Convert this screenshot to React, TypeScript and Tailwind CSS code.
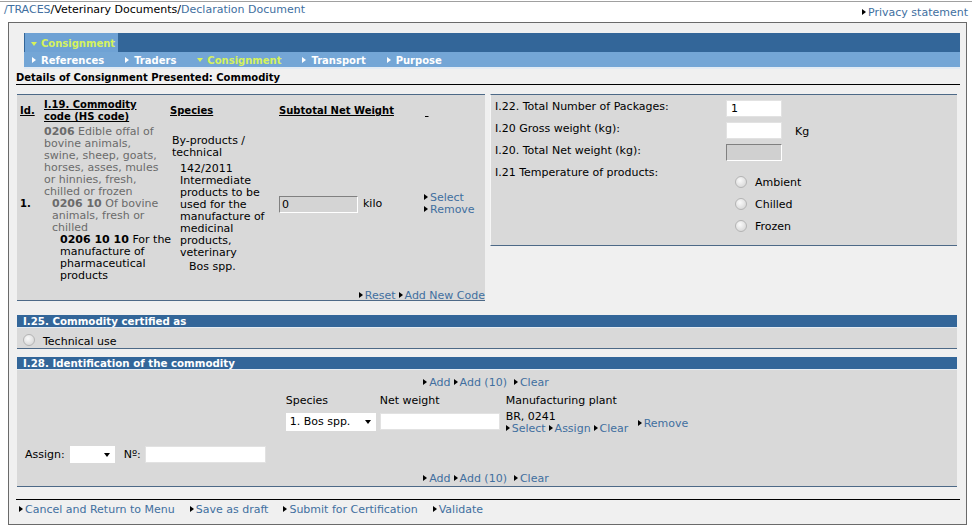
import React from "react";

const Tri = () => (
  <span className="inline-block w-0 h-0 border-y-[3.5px] border-y-transparent border-l-[4px] border-l-black mr-[2px] align-[1px]" />
);
const TriW = () => (
  <span className="inline-block w-0 h-0 border-y-[3.5px] border-y-transparent border-l-[4px] border-l-white mr-[5px] align-[1px]" />
);
const DownY = () => (
  <span className="inline-block w-0 h-0 border-x-[3.5px] border-x-transparent border-t-[4px] border-t-[#d6f25c] mr-[4px] align-[2px]" />
);
const DownB = () => (
  <span className="inline-block w-0 h-0 border-x-[3.5px] border-x-transparent border-t-[4px] border-t-black" />
);

const L = ({ children }: { children: React.ReactNode }) => (
  <span className="text-[#416f9f] whitespace-nowrap">
    <Tri />
    {children}
  </span>
);

const Radio = () => (
  <span className="inline-block w-[12px] h-[12px] rounded-full border border-[#b4b4b4] bg-[radial-gradient(circle_at_40%_35%,#fafafa,#d0d0d0)] shrink-0" />
);

const Bar = ({ children }: { children: React.ReactNode }) => (
  <div className="h-[12px] leading-[13px] bg-[#336699] text-white font-bold text-[10.25px] pl-[6px] border-b border-b-[#e4ebf2] box-content">
    {children}
  </div>
);

export default function App() {
  return (
    <div className="w-[972px] h-[526px] bg-white overflow-hidden font-['DejaVu_Sans',sans-serif] text-[11px] text-black">
      <div className="border-t border-[#a0a0a0] mt-[1px] h-[21px] flex justify-between leading-[13px]">
        <div className="pl-[4px] pt-[1px]">
          <span className="text-[#416f9f]">/TRACES</span>/Veterinary Documents/
          <span className="text-[#416f9f]">Declaration Document</span>
        </div>
        <div className="pr-[4px] pt-[4px]">
          <L>Privacy statement</L>
        </div>
      </div>

      <div className="ml-[8px] w-[959px] h-[503px] border border-[#6a6a6a] bg-[#f0f0f0] pl-[7px] pr-[6px] pt-[10px] flex flex-col">
        {/* nav */}
        <div className="ml-[8px]">
          <div className="h-[19px] bg-[#336699] flex">
            <div className="ml-[1px] w-[93px] bg-[#6fa2d4] flex items-center pt-[2px] pl-[6px] font-bold text-[10px] text-[#d6f25c] leading-[12px]">
              <DownY />
              Consignment
            </div>
          </div>
          <div className="h-[15px] bg-[#74a6d6] flex items-center pt-[2px] font-bold text-[10px] text-white pl-[8px] gap-[21px] leading-[12px]">
            <span className="whitespace-nowrap"><TriW />References</span>
            <span className="whitespace-nowrap"><TriW />Traders</span>
            <span className="whitespace-nowrap text-[#d6f25c]"><DownY />Consignment</span>
            <span className="whitespace-nowrap"><TriW />Transport</span>
            <span className="whitespace-nowrap"><TriW />Purpose</span>
          </div>
          <div className="h-[2px] bg-[#e2ebf4]" />
        </div>

        <div className="font-bold text-[10px] leading-[13px] pt-[2px] border-b border-black">
          Details of Consignment Presented: Commodity
        </div>

        {/* panels */}
        <div className="flex gap-[5px] ml-[1px] mr-[3px] mt-[9px] items-start">
          <div className="w-[468px] h-[207px] bg-[#d9d9d9] border-y border-[#4d6987] flex flex-col leading-[12px]">
            <div className="grid grid-cols-[24px_126px_109px_145px_61px] gap-y-[3px] pl-[3px] pt-[4px]">
              <div className="self-center font-bold text-[10px] underline">Id.</div>
              <div className="font-bold text-[10px] underline leading-[12px]">
                I.19. Commodity
                <br />
                code (HS code)
              </div>
              <div className="self-center font-bold text-[10px] underline">Species</div>
              <div className="self-center font-bold text-[10px] underline">Subtotal Net Weight</div>
              <div className="self-center pt-[2px] pl-[1px] underline">&nbsp;</div>

              <div className="self-center font-bold text-[10px]">1.</div>
              <div className="text-[#6b6b6b] whitespace-nowrap">
                <b>0206</b> Edible offal of
                <br />
                bovine animals,
                <br />
                swine, sheep, goats,
                <br />
                horses, asses, mules
                <br />
                or hinnies, fresh,
                <br />
                chilled or frozen
                <div className="pl-[8px]">
                  <b>0206 10</b> Of bovine
                  <br />
                  animals, fresh or
                  <br />
                  chilled
                  <div className="pl-[8px] text-black">
                    <b>0206 10 10</b> For the
                    <br />
                    manufacture of
                    <br />
                    pharmaceutical
                    <br />
                    products
                  </div>
                </div>
              </div>
              <div className="self-center whitespace-nowrap pl-[2px]">
                By-products /
                <br />
                technical
                <div className="pl-[8px] mt-[4px]">
                  142/2011
                  <br />
                  Intermediate
                  <br />
                  products to be
                  <br />
                  used for the
                  <br />
                  manufacture of
                  <br />
                  medicinal
                  <br />
                  products,
                  <br />
                  veterinary
                  <div className="pl-[9px] mt-[2px]">Bos spp.</div>
                </div>
              </div>
              <div className="self-center flex items-center">
                <div className="w-[79px] h-[17px] bg-[#d4d4d4] border-t border-l border-[#808080] border-b border-r border-b-white border-r-white pl-[2px] leading-[15px]">
                  0
                </div>
                <span className="ml-[5px]">kilo</span>
              </div>
              <div className="self-center flex flex-col leading-[12px]">
                <L>Select</L>
                <L>Remove</L>
              </div>
            </div>
            <div className="mt-auto flex justify-end gap-[3px] leading-[12px] -mb-[2px]">
              <L>Reset</L>
              <L>Add New Code</L>
            </div>
          </div>

          <div className="w-[467px] h-[152px] bg-[#d9d9d9] border-y border-[#4d6987] border-l border-l-[#f6f6f6] pl-[4px] pt-[5px] leading-[13px]">
            <div className="grid grid-cols-[231px_auto] gap-y-[5px]">
              <div>I.22. Total Number of Packages:</div>
              <div className="w-[56px] h-[17px] bg-white border border-[#e2e2e2] pl-[4px] leading-[15px]">1</div>
              <div>I.20 Gross weight (kg):</div>
              <div className="flex items-center">
                <div className="w-[56px] h-[17px] bg-white border border-[#e2e2e2]" />
                <span className="ml-[13px] mt-[1px]">Kg</span>
              </div>
              <div>I.20. Total Net weight (kg):</div>
              <div className="w-[56px] h-[17px] bg-[#d0d0d0] border-t border-l border-[#808080] border-b border-r border-b-white border-r-white" />
              <div>I.21 Temperature of products:</div>
              <div className="pl-[9px] pt-[9px] flex flex-col gap-y-[9px]">
                <div className="flex items-center gap-[8px] h-[13px]">
                  <Radio />
                  <span className="mt-[1px]">Ambient</span>
                </div>
                <div className="flex items-center gap-[8px] h-[13px]">
                  <Radio />
                  <span className="mt-[1px]">Chilled</span>
                </div>
                <div className="flex items-center gap-[8px] h-[13px]">
                  <Radio />
                  <span className="mt-[1px]">Frozen</span>
                </div>
              </div>
            </div>
          </div>
        </div>

        {/* I.25 */}
        <div className="ml-[1px] mr-[3px] mt-[14px]">
          <Bar>I.25. Commodity certified as</Bar>
          <div className="h-[21px] bg-[#d9d9d9] border-b border-[#4d6987] flex items-start pt-[6px] pl-[6px] gap-[8px] leading-[12px]">
            <Radio />
            <span className="mt-[2px]">Technical use</span>
          </div>
        </div>

        {/* I.28 */}
        <div className="ml-[1px] mr-[3px] mt-[8px]">
          <Bar>I.28. Identification of the commodity</Bar>
          <div className="h-[117px] bg-[#d9d9d9] border-b border-[#4d6987] flex flex-col pt-[7px] leading-[12px]">
            <div className="flex justify-center gap-[3px] pr-[2px]">
              <L>Add</L>
              <L>Add (10)</L>
              <span className="ml-[4px]"><L>Clear</L></span>
            </div>
            <div className="flex justify-center mt-[6px]">
              <div className="grid grid-cols-[94px_126px_132px_auto] gap-y-[6px]">
                <div>Species</div>
                <div>Net weight</div>
                <div>Manufacturing plant</div>
                <div />
                <div className="w-[90px] h-[18px] bg-white flex items-center justify-between pl-[4px] pr-[5px]">
                  <span>1. Bos spp.</span>
                  <DownB />
                </div>
                <div className="w-[120px] h-[17px] bg-white border border-[#e2e2e2]" />
                <div className="-mt-[2px]">
                  <div>BR, 0241</div>
                  <div className="flex gap-[3px]">
                    <L>Select</L>
                    <L>Assign</L>
                    <L>Clear</L>
                  </div>
                </div>
                <div className="self-center">
                  <L>Remove</L>
                </div>
              </div>
            </div>
            <div className="flex items-center pl-[8px] mt-[11px]">
              <span>Assign:</span>
              <div className="ml-[5px] w-[45px] h-[17px] bg-white flex items-center justify-end pr-[5px]">
                <DownB />
              </div>
              <span className="ml-[9px]">Nº:</span>
              <div className="ml-[4px] w-[121px] h-[17px] bg-white border border-[#e2e2e2]" />
            </div>
            <div className="flex justify-center gap-[3px] mt-[10px] pr-[2px]">
              <L>Add</L>
              <L>Add (10)</L>
              <span className="ml-[4px]"><L>Clear</L></span>
            </div>
          </div>
        </div>

        <div className="mt-[12px] border-t border-black pt-[4px] pl-[3px] flex gap-[15px] leading-[12px]">
          <L>Cancel and Return to Menu</L>
          <L>Save as draft</L>
          <L>Submit for Certification</L>
          <L>Validate</L>
        </div>
      </div>
    </div>
  );
}
